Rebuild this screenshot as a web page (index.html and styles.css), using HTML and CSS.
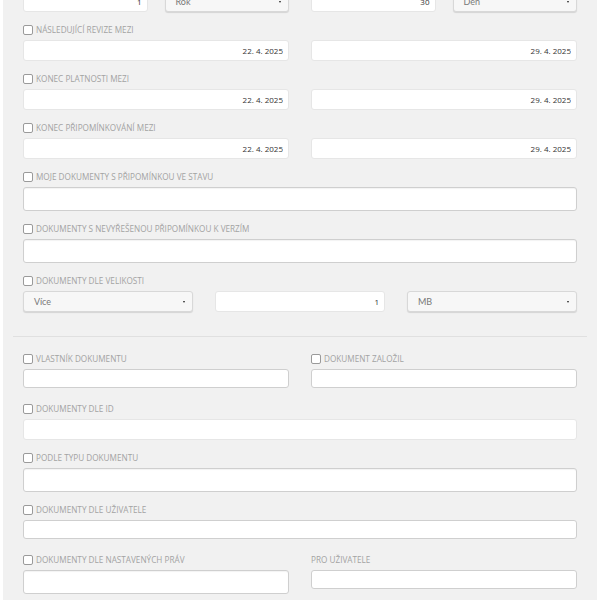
FILE: index.html
```html
<!DOCTYPE html>
<html lang="cs">

<head>
    <meta charset="UTF-8">
    <meta name="viewport" content="width=device-width, initial-scale=1.0">
    <title>Hledání dokumentů</title>
    <link rel="stylesheet" href="styles.css">
</head>

<body>
    <div class="panel">
        <div class="row row-2 top-row">
            <div class="row-pair">
                <input class="field num" type="text" value="1">
                <div class="select">Rok<span class="arrow"></span></div>
            </div>
            <div class="row-pair">
                <input class="field num" type="text" value="30">
                <div class="select">Den<span class="arrow"></span></div>
            </div>
        </div>

        <div class="group">
            <label class="check"><span class="box"></span>Následující revize mezi</label>
            <div class="row row-2">
                <input class="field num" type="text" value="22. 4. 2025">
                <input class="field num" type="text" value="29. 4. 2025">
            </div>
        </div>

        <div class="group">
            <label class="check"><span class="box"></span>Konec platnosti mezi</label>
            <div class="row row-2">
                <input class="field num" type="text" value="22. 4. 2025">
                <input class="field num" type="text" value="29. 4. 2025">
            </div>
        </div>

        <div class="group">
            <label class="check"><span class="box"></span>Konec připomínkování mezi</label>
            <div class="row row-2">
                <input class="field num" type="text" value="22. 4. 2025">
                <input class="field num" type="text" value="29. 4. 2025">
            </div>
        </div>

        <div class="group">
            <label class="check"><span class="box"></span>Moje dokumenty s připomínkou ve stavu</label>
            <div class="field tall"></div>
        </div>

        <div class="group">
            <label class="check"><span class="box"></span>Dokumenty s nevyřešenou připomínkou k verzím</label>
            <div class="field tall"></div>
        </div>

        <div class="group">
            <label class="check"><span class="box"></span>Dokumenty dle velikosti</label>
            <div class="row row-3">
                <div class="select">Více<span class="arrow"></span></div>
                <input class="field num" type="text" value="1">
                <div class="select">MB<span class="arrow"></span></div>
            </div>
        </div>

        <hr class="divider">

        <div class="row row-2">
            <div class="group short">
                <label class="check"><span class="box"></span>Vlastník dokumentu</label>
                <div class="field low"></div>
            </div>
            <div class="group short">
                <label class="check"><span class="box"></span>Dokument založil</label>
                <div class="field low"></div>
            </div>
        </div>

        <div class="group">
            <label class="check"><span class="box"></span>Dokumenty dle ID</label>
            <input class="field" type="text">
        </div>

        <div class="group">
            <label class="check"><span class="box"></span>Podle typu dokumentu</label>
            <div class="field tall"></div>
        </div>

        <div class="group short">
            <label class="check"><span class="box"></span>Dokumenty dle uživatele</label>
            <div class="field low"></div>
        </div>

        <div class="row row-2">
            <div class="group">
                <label class="check"><span class="box"></span>Dokumenty dle nastavených práv</label>
                <div class="field tall"></div>
            </div>
            <div class="group">
                <label class="check">Pro uživatele</label>
                <div class="field low"></div>
            </div>
        </div>
    </div>
</body>

</html>
```

FILE: styles.css
```css
body {
    margin: 0;
    background-color: #fff;
    font-family: "Open Sans", "Liberation Sans", sans-serif;
}

.panel {
    margin: -9px 3px 0;
    padding: 0 20px 20px;
    background-color: #f1f1f1;
}

.row {
    display: grid;
    column-gap: 22px;
}

.row-2 {
    grid-template-columns: 1fr 1fr;
}

.row-3 {
    grid-template-columns: 1fr 1fr 1fr;
}

.row-pair {
    display: grid;
    grid-template-columns: 1fr 1fr;
    column-gap: 17px;
}

.top-row {
    margin-bottom: 12px;
}

.group {
    margin-bottom: 12px;
}

.group.short {
    margin-bottom: 15px;
}

.check {
    display: flex;
    align-items: center;
    gap: 3px;
    height: 11px;
    margin-bottom: 5px;
    font-size: 8.2px;
    line-height: 11px;
    text-transform: uppercase;
    color: #a3a3a3;
}

.box {
    width: 8px;
    height: 8px;
    border: 1px solid #9a9a9a;
    border-radius: 2px;
    background-color: #fff;
}

.field {
    display: block;
    box-sizing: border-box;
    width: 100%;
    height: 21px;
    margin: 0;
    padding: 0 5px;
    border: 1px solid #e6e6e6;
    border-radius: 3px;
    background-color: #fff;
    font-family: inherit;
    font-size: 8px;
    color: #333;
    outline: none;
}

.num {
    text-align: right;
}

.tall {
    height: 24px;
    border-color: #cfcfcf;
    box-shadow: inset 0 1px 1px rgba(0, 0, 0, 0.05);
}

.low {
    height: 19px;
    border-color: #cfcfcf;
}

.select {
    position: relative;
    box-sizing: border-box;
    height: 21px;
    padding: 0 10px;
    border: 1px solid #d8d8d8;
    border-radius: 3px;
    background-color: #f7f7f7;
    box-shadow: 0 1px 1px rgba(0, 0, 0, 0.12);
    font-family: "Lato", "Open Sans", sans-serif;
    font-size: 9px;
    line-height: 19px;
    color: #777;
}

.arrow {
    position: absolute;
    right: 7px;
    top: 9px;
    border-left: 1.5px solid transparent;
    border-right: 1.5px solid transparent;
    border-top: 2px solid #222;
}

.divider {
    margin: 24px -10px 16px;
    border: 0;
    border-top: 1px solid #e0e0e0;
}
```
